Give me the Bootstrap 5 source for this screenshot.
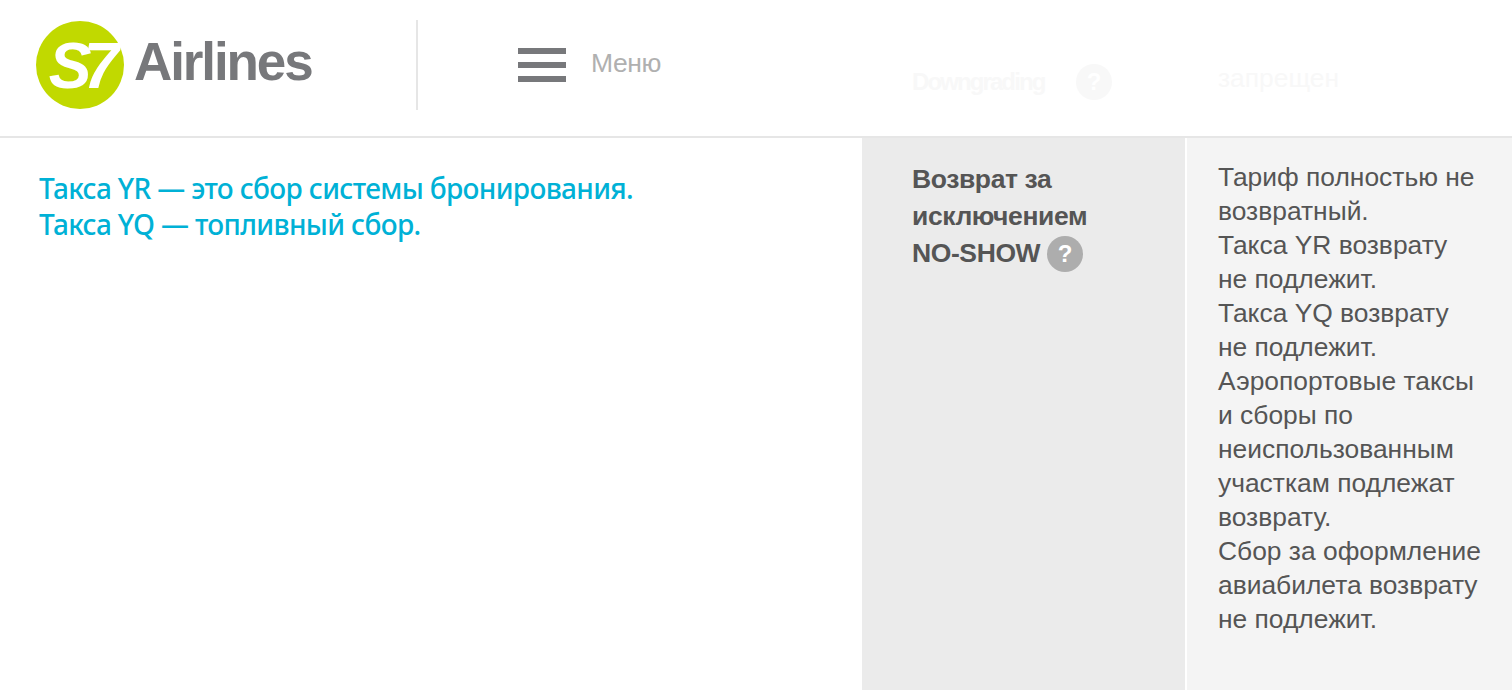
<!DOCTYPE html>
<html lang="ru">
<head>
    <meta charset="UTF-8">
    <meta name="viewport" content="width=device-width, initial-scale=1.0">
    <title>S7 Airlines</title>
    <link rel="stylesheet" href="https://cdn.jsdelivr.net/npm/bootstrap@5.3.0/dist/css/bootstrap.min.css">
    <style>
        body { font-family: "Liberation Sans", Arial, sans-serif; color: #555; overflow: hidden; background: #fff; }
        .top-bar { height: 138px; border-bottom: 2px solid #e6e6e6; }
        .logo-box { padding: 21px 0 0 36px; width: 416px; height: 136px; flex-shrink: 0; }
        .logo-circle { width: 88px; height: 88px; border-radius: 50%; background: #c1d900; color: #fff; font-size: 64px; line-height: 90px; font-weight: 700; font-style: italic; letter-spacing: -8px; text-align: center; }
        .logo-word { font-size: 53px; line-height: 82px; font-weight: 700; color: #77787b; letter-spacing: -2.1px; margin-left: 10px; }
        .logo-split { width: 2px; height: 90px; margin-top: 20px; background: #e6e6e6; }
        .menu-box { padding: 48px 0 0 100px; width: 494px; flex-shrink: 0; }
        .burger { width: 48px; height: 34px; flex-direction: column; }
        .burger span { height: 6px; background: #77787b; display: block; }
        .menu-word { font-size: 26.5px; line-height: 30px; margin: 0 0 0 25px; color: #b0b0b0; letter-spacing: -0.4px; }
        .ghost-left { width: 306px; flex-shrink: 0; padding-top: 64px; font-size: 24px; font-weight: 700; line-height: 34px; letter-spacing: -1.9px; color: #f8f8f8; }
        .ghost-right { padding-top: 61px; font-size: 26.4px; line-height: 34px; color: #f8f8f8; }
        .hint-mark { display: inline-block; width: 36px; height: 36px; border-radius: 50%; background: #adadad; color: #fff; font-size: 24px; line-height: 36px; text-align: center; font-weight: 700; letter-spacing: 0; }
        .ghost-left .hint-mark { background: #f8f8f8; margin-left: 27px; }
        .page-main { height: 552px; }
        .note-col { width: 862px; flex-shrink: 0; padding: 32px 0 0 39px; }
        .note-text { font-family: "Noto Sans", "Open Sans", sans-serif; font-size: 28px; line-height: 36px; font-weight: 500; color: #00b1d6; letter-spacing: -0.65px; margin: 0; }
        .label-col { width: 323px; flex-shrink: 0; background: #ebebeb; padding: 23px 20px 0 50px; font-size: 26.5px; line-height: 37px; font-weight: 700; letter-spacing: -0.4px; color: #555; }
        .value-col { flex-grow: 1; margin-left: 2px; background: #f4f4f4; padding: 22px 25px 0 31px; font-size: 26.4px; line-height: 34px; color: #555; }
    </style>
</head>
<body>
    <header class="top-bar d-flex">
        <div class="logo-box d-flex">
            <div class="logo-circle flex-shrink-0">S7</div>
            <div class="logo-word">Airlines</div>
        </div>
        <div class="logo-split flex-shrink-0"></div>
        <div class="menu-box d-flex">
            <div class="burger d-flex justify-content-between"><span></span><span></span><span></span></div>
            <p class="menu-word">Меню</p>
        </div>
        <div class="ghost-left">Downgrading <span class="hint-mark">?</span></div>
        <div class="ghost-right">запрещен</div>
    </header>
    <main class="page-main d-flex">
        <div class="note-col">
            <p class="note-text">Такса YR — это сбор системы бронирования.<br>Такса YQ — топливный сбор.</p>
        </div>
        <div class="label-col">Возврат за исключением <span class="text-nowrap">NO-SHOW <span class="hint-mark">?</span></span></div>
        <div class="value-col">
            Тариф полностью не возвратный.<br>
            Такса YR возврату не&nbsp;подлежит.<br>
            Такса YQ возврату не&nbsp;подлежит.<br>
            Аэропортовые таксы и&nbsp;сборы по неиспользованным участкам подлежат возврату.<br>
            Сбор за оформление авиабилета возврату не&nbsp;подлежит.
        </div>
    </main>
    <script src="https://cdn.jsdelivr.net/npm/bootstrap@5.3.0/dist/js/bootstrap.bundle.min.js"></script>
</body>
</html>
